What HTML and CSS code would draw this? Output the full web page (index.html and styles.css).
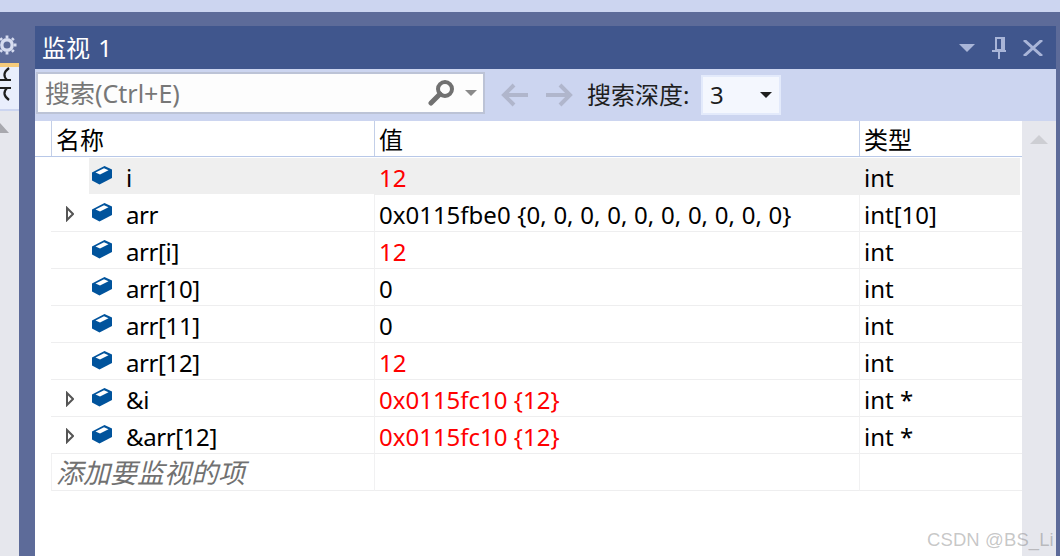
FILE: index.html
```html
<!DOCTYPE html>
<html lang="zh-CN">
<head>
<meta charset="utf-8">
<title>监视 1</title>
<link rel="stylesheet" href="styles.css">
</head>
<body>
<svg class="defs" width="0" height="0">
  <defs>
    <symbol id="cube" viewBox="0 0 20 19">
      <path d="M0 6.500 12.500 0 20 3.500V12L7.500 18.500 0 14.500Z" fill="#00539c"/>
      <path d="M3.500 6.500 12 2.300 16.500 4.200 8 8.500Z" fill="#fff"/>
    </symbol>
    <symbol id="exp" viewBox="0 0 8 16">
      <path d="M1 2 7 8 1 14Z" fill="#fff" stroke="#555" stroke-width="2"/>
    </symbol>
  </defs>
</svg>
<div class="top"></div>
<div class="main">
  <aside class="side">
    <div class="gear">
      <svg width="19" height="22" viewBox="0 0 19 22"><g transform="translate(8 11)" fill="none" stroke="#d6dcf0"><circle r="5.200" stroke-width="3.400"/><path stroke-width="2.800" d="M0-9.500V-7M0 7V9.500M-9.500 0H-7M7 0H9.500M-6.700-6.700-5-5M5 5 6.700 6.700M-6.700 6.700-5 5M5-5 6.700-6.700"/></g></svg>
    </div>
    <div class="tab">
      <svg width="19" height="38" viewBox="0 0 19 38"><path d="M0 13H11M0 21H11M9 1Q1 7 7 13M7 21Q1 27 9 33" fill="none" stroke="#1e1e1e" stroke-width="2.200"/></svg>
    </div>
    <div class="track"><span class="track-arrow"></span></div>
  </aside>
  <section class="win">
    <header class="title">
      <span class="title-text">监视 1</span>
      <div class="title-btns">
        <span class="tri-down"></span>
        <svg width="14" height="22" viewBox="0 0 14 22"><path d="M4 1H12V13H4ZM10 1V13M0 14H14M7 14V22" fill="none" stroke="#a9b5d8" stroke-width="2"/></svg>
        <svg width="20" height="16" viewBox="0 0 20 16"><path d="M1 0 19 16M19 0 1 16" fill="none" stroke="#a9b5d8" stroke-width="3"/></svg>
      </div>
    </header>
    <div class="toolbar">
      <div class="search">
        <span class="search-text">搜索(Ctrl+E)</span>
        <svg class="glass" width="27" height="27" viewBox="0 0 27 27"><circle cx="17" cy="10" r="7" fill="none" stroke="#717171" stroke-width="4"/><path d="M12 15 3 24" stroke="#717171" stroke-width="5" stroke-linecap="round"/></svg>
        <span class="tri-small"></span>
      </div>
      <svg class="nav" width="28" height="24" viewBox="0 0 28 24"><path d="M27 12H3M13 2 3 12 13 22" fill="none" stroke="#b0b6cc" stroke-width="4"/></svg>
      <svg class="nav" width="28" height="24" viewBox="0 0 28 24"><path d="M1 12H25M15 2 25 12 15 22" fill="none" stroke="#b0b6cc" stroke-width="4"/></svg>
      <span class="depth-label">搜索深度:</span>
      <div class="combo"><span>3</span><span class="tri-black"></span></div>
    </div>
    <div class="body">
      <div class="grid">
        <div class="head">
          <div class="head-gutter"></div>
          <div class="hc c-name">名称</div>
          <div class="hc c-val">值</div>
          <div class="hc c-type">类型</div>
        </div>
        <div class="row sel">
          <div class="c-name"><span class="expander"></span><div class="nm"><svg class="cube"><use href="#cube"/></svg><span>i</span></div></div>
          <div class="c-val cell red">12</div>
          <div class="c-type cell">int</div>
        </div>
        <div class="row">
          <div class="c-name"><span class="expander"><svg class="exp"><use href="#exp"/></svg></span><div class="nm"><svg class="cube"><use href="#cube"/></svg><span>arr</span></div></div>
          <div class="c-val cell spaced">0x0115fbe0 {0, 0, 0, 0, 0, 0, 0, 0, 0, 0}</div>
          <div class="c-type cell">int[10]</div>
        </div>
        <div class="row">
          <div class="c-name"><span class="expander"></span><div class="nm"><svg class="cube"><use href="#cube"/></svg><span>arr[i]</span></div></div>
          <div class="c-val cell red">12</div>
          <div class="c-type cell">int</div>
        </div>
        <div class="row">
          <div class="c-name"><span class="expander"></span><div class="nm"><svg class="cube"><use href="#cube"/></svg><span>arr[10]</span></div></div>
          <div class="c-val cell">0</div>
          <div class="c-type cell">int</div>
        </div>
        <div class="row">
          <div class="c-name"><span class="expander"></span><div class="nm"><svg class="cube"><use href="#cube"/></svg><span>arr[11]</span></div></div>
          <div class="c-val cell">0</div>
          <div class="c-type cell">int</div>
        </div>
        <div class="row">
          <div class="c-name"><span class="expander"></span><div class="nm"><svg class="cube"><use href="#cube"/></svg><span>arr[12]</span></div></div>
          <div class="c-val cell red">12</div>
          <div class="c-type cell">int</div>
        </div>
        <div class="row">
          <div class="c-name"><span class="expander"><svg class="exp"><use href="#exp"/></svg></span><div class="nm"><svg class="cube"><use href="#cube"/></svg><span>&amp;i</span></div></div>
          <div class="c-val cell red">0x0115fc10 {12}</div>
          <div class="c-type cell">int *</div>
        </div>
        <div class="row">
          <div class="c-name"><span class="expander"><svg class="exp"><use href="#exp"/></svg></span><div class="nm"><svg class="cube"><use href="#cube"/></svg><span>&amp;arr[12]</span></div></div>
          <div class="c-val cell red">0x0115fc10 {12}</div>
          <div class="c-type cell">int *</div>
        </div>
        <div class="row add">
          <div class="c-name add-text">添加要监视的项</div>
          <div class="c-val cell"></div>
          <div class="c-type cell"></div>
        </div>
      </div>
      <div class="scroll"><span class="scroll-arrow"></span></div>
    </div>
  </section>
</div>
<div class="mark">CSDN @BS_Li</div>
</body>
</html>
```
FILE: styles.css
```css
* { box-sizing: border-box; }
html, body { margin: 0; height: 100%; overflow: hidden; }
body {
  width: 1060px;
  height: 556px;
  display: flex;
  flex-direction: column;
  background: #5d6b99;
  font-family: "Noto Sans", "Noto Sans CJK SC", sans-serif;
  font-size: 24px;
  color: #000;
  position: relative;
}
.defs { position: absolute; }
.top { height: 12px; background: #ccd5f0; flex: none; }
.main { flex: 1; display: flex; padding: 14px 4px 0 0; min-height: 0; }
.side { width: 19px; margin-right: 16px; display: flex; flex-direction: column; flex: none; }
.gear { height: 37px; display: flex; align-items: center; overflow: hidden; margin-left: -1px; }
.gear svg { flex: none; }
.tab { height: 48px; background: #e9eefc; border-top: 4px solid #f6cb7b; border-bottom: 2px solid #ccd5f0; overflow: hidden; }
.tab svg { display: block; }
.track { flex: 1; background: #e6e7ed; padding-top: 12px; }
.track-arrow { display: block; width: 0; height: 0; border-left: 9px solid transparent; border-right: 9px solid transparent; border-bottom: 10px solid #a8a8ae; margin-left: -9px; }
.win { flex: 1; display: flex; flex-direction: column; background: #fff; min-width: 0; }
.title { height: 43px; flex: none; background: #40568d; display: flex; align-items: center; justify-content: space-between; color: #fff; padding: 0 13px 0 7px; }
.title-text { font-size: 24px; line-height: 43px; word-spacing: 2px; }
.title-btns { display: flex; align-items: center; gap: 17px; }
.tri-down { width: 0; height: 0; border-left: 8px solid transparent; border-right: 8px solid transparent; border-top: 8px solid #a9b5d8; }
.toolbar { height: 52px; flex: none; background: #ccd5f0; display: flex; align-items: center; padding-left: 1px; }
.search { width: 449px; height: 42px; margin-top: -5px; background: #fdfdfd; border: 2px solid #bcc3d6; display: flex; align-items: center; padding: 0 6px 0 7px; flex: none; }
.search-text { color: #777; flex: 1; font-size: 25px; line-height: 38px; }
.glass { margin-right: 10px; }
.tri-small { width: 0; height: 0; border-left: 6px solid transparent; border-right: 6px solid transparent; border-top: 6px solid #8a8a8a; }
.nav { margin-left: 16px; flex: none; }
.depth-label { margin-left: 14px; width: 114px; color: #1e1e1e; white-space: nowrap; line-height: 40px; }
.combo { width: 80px; height: 40px; background: #f4f7fe; border: 2px solid #e3eafb; margin-top: -1px; display: flex; align-items: center; justify-content: space-between; padding: 0 7px 0 7px; color: #1e1e1e; }
.tri-black { width: 0; height: 0; border-left: 6px solid transparent; border-right: 6px solid transparent; border-top: 6px solid #1e1e1e; }
.body { flex: 1; display: flex; min-height: 0; }
.grid { width: 987px; flex: none; }
.scroll { flex: 1; background: #e6e7ed; padding-top: 14px; }
.scroll-arrow { display: block; width: 0; height: 0; margin: 0 auto; border-left: 9px solid transparent; border-right: 9px solid transparent; border-bottom: 9px solid #cdced3; }
.head { display: flex; height: 37px; padding-bottom: 1px; background: linear-gradient(#b8c8e8, #b8c8e8) 0 35px / 100% 1px no-repeat #fff; }
.head-gutter { width: 16px; height: 35px; }
.hc { height: 35px; line-height: 37px; padding-left: 4px; border-left: 1px solid #c3cfe8; }
.c-name { width: 323px; flex: none; display: flex; }
.c-val { width: 485px; flex: none; }
.c-type { width: 163px; flex: none; }
.row { display: flex; height: 37px; margin-left: 16px; line-height: 40px; }
.row > div { border-bottom: 1px solid #eeeeef; }
.cell { padding-left: 4px; border-left: 1px solid #f1f1f2; white-space: nowrap; }
.spaced { word-spacing: 0.5px; }
.red { color: #ff0000; }
.expander { width: 38px; flex: none; display: flex; align-items: flex-start; padding: 11px 0 0 15px; }
.exp { width: 8px; height: 16px; }
.nm { flex: 1; display: flex; align-items: flex-start; letter-spacing: -0.4px; }
.cube { width: 20px; height: 19px; margin: 8px 14px 0 3px; flex: none; }
.sel > div { border-bottom-color: transparent; }
.sel .nm, .sel .cell { background: #efefef; border-left-color: #efefef; }
.sel .c-type { margin-right: 2px; width: 161px; }
.add-text { font-style: italic; font-size: 27px; line-height: 38px; color: #717171; padding-left: 4px; border-left: 1px solid #f1f1f2; white-space: nowrap; }
.mark { position: absolute; left: 927px; top: 529px; font-family: "Liberation Sans", sans-serif; font-size: 18.500px; line-height: 22px; letter-spacing: 0.1px; color: rgba(120,120,120,0.42); white-space: nowrap; }
```
